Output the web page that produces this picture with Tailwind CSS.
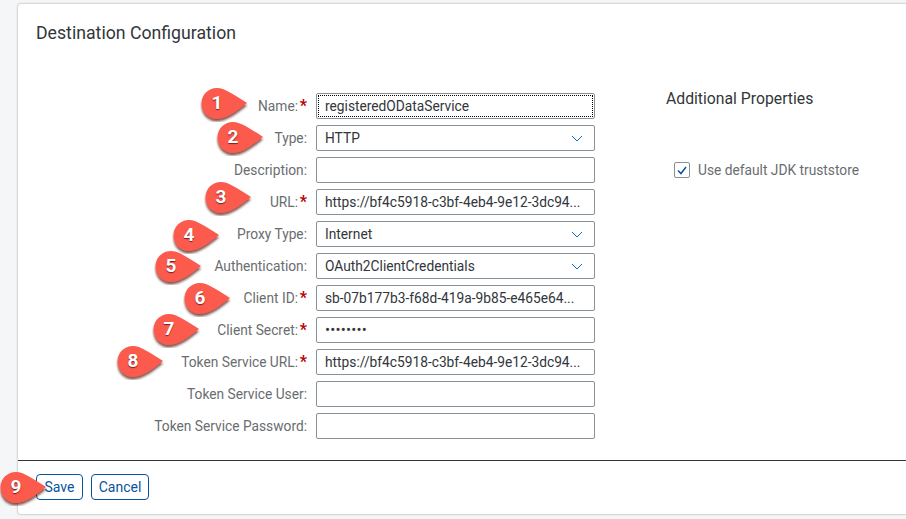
<!DOCTYPE html>
<html>
<head>
<meta charset="utf-8">
<script src="https://cdn.jsdelivr.net/npm/@tailwindcss/browser@4"></script>
</head>
<body class="w-[906px] h-[519px] overflow-hidden bg-[#f5f6f7] font-['Roboto',sans-serif]">
<svg width="0" height="0" class="absolute">
  <defs>
    <filter id="sh" x="-20%" y="-20%" width="140%" height="150%"><feDropShadow dx="0" dy="2.5" stdDeviation="1.2" flood-color="#5a1a14" flood-opacity="0.75"/></filter>
    <symbol id="drop" viewBox="0 0 50 36"><path d="M17 2C25 2 36 10 47 17C38 24 27 33 17 33C8 33 1.5 26 1.5 17.5C1.5 9 8 2 17 2Z" fill="#fb5a4e" filter="url(#sh)"/></symbol>
  </defs>
</svg>
<div class="relative w-[906px] h-[519px] pt-[3px]">
  <div class="ml-[17px] w-[900px] h-[512px] bg-white border border-[#d9d9d9] rounded-l-[4px] flex flex-col shadow-[0_0_2px_rgba(0,0,0,0.12)]">
    <h1 class="pl-[18px] pt-[18px] h-[88px] text-[17.7px] leading-[22px] text-[#32363a]">Destination Configuration</h1>
    <div class="flex flex-1 pt-[1px]">
      <div class="w-[578px] flex flex-col gap-[6px]">
        <div class="flex items-center h-[26px]"><label class="w-[290px] pr-[1px] flex justify-end items-baseline text-[13.75px] text-[#6a6d70]">Name:<span class="text-[#bb0000] w-[9px] text-right font-bold text-[16px] leading-[14px]">*</span></label><div class="ml-[8px] w-[279px] h-[26px] border border-[#89919a] rounded-[2px] p-[1px]"><div class="h-full border border-dotted border-black pl-[6px] text-[13.75px] leading-[20px] text-[#32363a]">registeredODataService</div></div></div>
        <div class="flex items-center h-[26px]"><label class="w-[290px] pr-[1px] flex justify-end text-[13.75px] text-[#6a6d70]">Type:</label><div class="ml-[8px] w-[279px] h-[26px] border border-[#89919a] rounded-[2px] pl-[8px] pr-[11px] flex items-center justify-between text-[13.75px] text-[#32363a]">HTTP<svg width="12" height="7" viewBox="0 0 12 7" fill="none" stroke="#0a6ed1" stroke-width="1"><path d="M1 1L6 6L11 1"/></svg></div></div>
        <div class="flex items-center h-[26px]"><label class="w-[290px] pr-[1px] flex justify-end text-[13.75px] text-[#6a6d70]">Description:</label><div class="ml-[8px] w-[279px] h-[26px] border border-[#89919a] rounded-[2px]"></div></div>
        <div class="flex items-center h-[26px]"><label class="w-[290px] pr-[1px] flex justify-end items-baseline text-[13.75px] text-[#6a6d70]">URL:<span class="text-[#bb0000] w-[9px] text-right font-bold text-[16px] leading-[14px]">*</span></label><div class="ml-[8px] w-[279px] h-[26px] border border-[#89919a] rounded-[2px] pl-[8px] flex items-center text-[13.75px] text-[#32363a]">https://bf4c5918-c3bf-4eb4-9e12-3dc94...</div></div>
        <div class="flex items-center h-[26px]"><label class="w-[290px] pr-[1px] flex justify-end text-[13.75px] text-[#6a6d70]">Proxy Type:</label><div class="ml-[8px] w-[279px] h-[26px] border border-[#89919a] rounded-[2px] pl-[8px] pr-[11px] flex items-center justify-between text-[13.75px] text-[#32363a]">Internet<svg width="12" height="7" viewBox="0 0 12 7" fill="none" stroke="#0a6ed1" stroke-width="1"><path d="M1 1L6 6L11 1"/></svg></div></div>
        <div class="flex items-center h-[26px]"><label class="w-[290px] pr-[1px] flex justify-end text-[13.75px] text-[#6a6d70]">Authentication:</label><div class="ml-[8px] w-[279px] h-[26px] border border-[#89919a] rounded-[2px] pl-[8px] pr-[11px] flex items-center justify-between text-[13.75px] text-[#32363a]">OAuth2ClientCredentials<svg width="12" height="7" viewBox="0 0 12 7" fill="none" stroke="#0a6ed1" stroke-width="1"><path d="M1 1L6 6L11 1"/></svg></div></div>
        <div class="flex items-center h-[26px]"><label class="w-[290px] pr-[1px] flex justify-end items-baseline text-[13.75px] text-[#6a6d70]">Client ID:<span class="text-[#bb0000] w-[9px] text-right font-bold text-[16px] leading-[14px]">*</span></label><div class="ml-[8px] w-[279px] h-[26px] border border-[#89919a] rounded-[2px] pl-[8px] flex items-center text-[13.75px] text-[#32363a]">sb-07b177b3-f68d-419a-9b85-e465e64...</div></div>
        <div class="flex items-center h-[26px]"><label class="w-[290px] pr-[1px] flex justify-end items-baseline text-[13.75px] text-[#6a6d70]">Client Secret:<span class="text-[#bb0000] w-[9px] text-right font-bold text-[16px] leading-[14px]">*</span></label><div class="ml-[8px] w-[279px] h-[26px] border border-[#89919a] rounded-[2px] pl-[8px] flex items-center text-[15px] tracking-[0.2px] text-[#32363a]">••••••••</div></div>
        <div class="flex items-center h-[26px]"><label class="w-[290px] pr-[1px] flex justify-end items-baseline text-[13.75px] text-[#6a6d70]">Token Service URL:<span class="text-[#bb0000] w-[9px] text-right font-bold text-[16px] leading-[14px]">*</span></label><div class="ml-[8px] w-[279px] h-[26px] border border-[#89919a] rounded-[2px] pl-[8px] flex items-center text-[13.75px] text-[#32363a]">https://bf4c5918-c3bf-4eb4-9e12-3dc94...</div></div>
        <div class="flex items-center h-[26px]"><label class="w-[290px] pr-[1px] flex justify-end text-[13.75px] text-[#6a6d70]">Token Service User:</label><div class="ml-[8px] w-[279px] h-[26px] border border-[#89919a] rounded-[2px]"></div></div>
        <div class="flex items-center h-[26px]"><label class="w-[290px] pr-[1px] flex justify-end text-[13.75px] text-[#6a6d70]">Token Service Password:</label><div class="ml-[8px] w-[279px] h-[26px] border border-[#89919a] rounded-[2px]"></div></div>
      </div>
      <div class="pl-[70px]">
        <h2 class="text-[15.75px] leading-[20px] -mt-[4px] text-[#32363a]">Additional Properties</h2>
        <div class="mt-[53px] ml-[8px] flex items-center gap-[8px] h-[16px]">
          <span class="w-[16px] h-[16px] border border-[#89919a] rounded-[2px] flex items-center justify-center"><svg width="10" height="9" viewBox="0 0 10 9" fill="none" stroke="#0854a0" stroke-width="1.5"><path d="M1 4.5L4 7.5L9 1"/></svg></span>
          <span class="text-[13.75px] text-[#6a6d70]">Use default JDK truststore</span>
        </div>
      </div>
    </div>
    <div class="h-[54px] border-t border-[#32363a] pt-[13px] pl-[18px] flex gap-[8px]">
      <button class="w-[47px] h-[26px] border border-[#0854a0] rounded-[4px] text-[14px] text-[#0854a0]">Save</button>
      <button class="w-[58px] h-[26px] border border-[#0854a0] rounded-[4px] text-[14px] text-[#0854a0]">Cancel</button>
    </div>
  </div>

  <div class="absolute left-[200px] top-[86px] w-[50px] h-[36px]"><svg class="absolute inset-0" width="50" height="36"><use href="#drop"/></svg><span class="absolute left-0 top-0 w-[34px] h-[35px] flex items-center justify-center text-white font-bold text-[19px] [text-shadow:0_1px_1px_#7a1f18]">1</span></div>
  <div class="absolute left-[216px] top-[120px] w-[50px] h-[36px]"><svg class="absolute inset-0" width="50" height="36"><use href="#drop"/></svg><span class="absolute left-0 top-0 w-[34px] h-[35px] flex items-center justify-center text-white font-bold text-[19px] [text-shadow:0_1px_1px_#7a1f18]">2</span></div>
  <div class="absolute left-[204px] top-[180px] w-[50px] h-[36px]"><svg class="absolute inset-0" width="50" height="36"><use href="#drop"/></svg><span class="absolute left-0 top-0 w-[34px] h-[35px] flex items-center justify-center text-white font-bold text-[19px] [text-shadow:0_1px_1px_#7a1f18]">3</span></div>
  <div class="absolute left-[172px] top-[218px] w-[50px] h-[36px]"><svg class="absolute inset-0" width="50" height="36"><use href="#drop"/></svg><span class="absolute left-0 top-0 w-[34px] h-[35px] flex items-center justify-center text-white font-bold text-[19px] [text-shadow:0_1px_1px_#7a1f18]">4</span></div>
  <div class="absolute left-[154px] top-[249px] w-[50px] h-[36px]"><svg class="absolute inset-0" width="50" height="36"><use href="#drop"/></svg><span class="absolute left-0 top-0 w-[34px] h-[35px] flex items-center justify-center text-white font-bold text-[19px] [text-shadow:0_1px_1px_#7a1f18]">5</span></div>
  <div class="absolute left-[183px] top-[281px] w-[50px] h-[36px]"><svg class="absolute inset-0" width="50" height="36"><use href="#drop"/></svg><span class="absolute left-0 top-0 w-[34px] h-[35px] flex items-center justify-center text-white font-bold text-[19px] [text-shadow:0_1px_1px_#7a1f18]">6</span></div>
  <div class="absolute left-[152px] top-[312px] w-[50px] h-[36px]"><svg class="absolute inset-0" width="50" height="36"><use href="#drop"/></svg><span class="absolute left-0 top-0 w-[34px] h-[35px] flex items-center justify-center text-white font-bold text-[19px] [text-shadow:0_1px_1px_#7a1f18]">7</span></div>
  <div class="absolute left-[116px] top-[344px] w-[50px] h-[36px]"><svg class="absolute inset-0" width="50" height="36"><use href="#drop"/></svg><span class="absolute left-0 top-0 w-[34px] h-[35px] flex items-center justify-center text-white font-bold text-[19px] [text-shadow:0_1px_1px_#7a1f18]">8</span></div>
  <div class="absolute left-[-1px] top-[470px] w-[50px] h-[36px]"><svg class="absolute inset-0" width="50" height="36"><use href="#drop"/></svg><span class="absolute left-0 top-0 w-[34px] h-[35px] flex items-center justify-center text-white font-bold text-[19px] [text-shadow:0_1px_1px_#7a1f18]">9</span></div>
</div>
</body>
</html>
